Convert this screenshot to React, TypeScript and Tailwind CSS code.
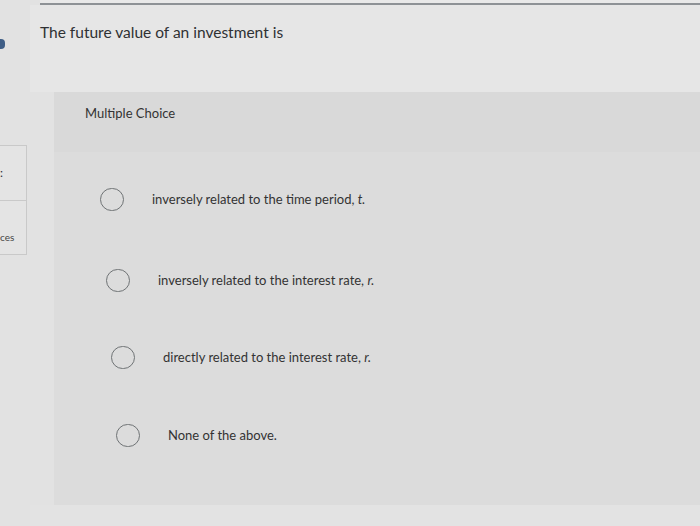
const options = [
  { text: 'inversely related to the time period, ', v: 't.', indent: 'pl-[46px]', mt: 'mt-[35px]' },
  { text: 'inversely related to the interest rate, ', v: 'r.', indent: 'pl-[52px]', mt: 'mt-[57px]' },
  { text: 'directly related to the interest rate, ', v: 'r.', indent: 'pl-[57px]', mt: 'mt-[53px]' },
  { text: 'None of the above.', v: '', indent: 'pl-[62px]', mt: 'mt-[54px]' },
]

function Radio() {
  return <div className="w-[24px] h-[23px] rounded-full border-[1.5px] border-[#6f7375] shrink-0" />
}

export default function App() {
  return (
    <div className="w-[700px] h-[526px] bg-[#e2e2e2] flex overflow-hidden text-[#2f3133]" style={{ fontFamily: 'Lato, "Open Sans", sans-serif' }}>
      {/* left sidebar sliver */}
      <div className="w-[30px] shrink-0 flex flex-col">
        <div className="h-[39px]" />
        <div className="w-[8px] h-[10px] rounded-full bg-[#3f5e86] -ml-[3px]" />
        <div className="h-[96px]" />
        <div className="w-[27px] h-[110px] border-y border-r border-[#c9c9c9] bg-[#e4e4e4] flex flex-col">
          <div className="h-[55px] border-b border-[#c9c9c9] flex items-center">
            <span className="text-[12px] leading-none">:</span>
          </div>
          <div className="flex-1 flex items-end pb-[12px]">
            <span className="text-[10px] leading-none text-[#444]">ces</span>
          </div>
        </div>
      </div>

      {/* main */}
      <div className="flex-1 flex flex-col">
        <div className="h-[5px] border-b-2 border-[#8e9296] ml-[10px] bg-[#e9e9e9]" />
        <div className="h-[87px] bg-[#e6e6e6] pl-[10px] pt-[18px]">
          <p className="text-[15.5px] leading-[18px]">The future value of an investment is</p>
        </div>
        <div className="ml-[24px] h-[413px] bg-[#dcdcdc] flex flex-col">
          <div className="bg-[#d9d9d9] h-[60px] pl-[31px] pt-[14px]">
            <p className="text-[13px] leading-[15px] text-[#333]">Multiple Choice</p>
          </div>
          <div className="flex flex-col">
            {options.map((o, i) => (
              <div key={i} className={`${o.mt} ${o.indent} h-[24px] flex items-center gap-[28px]`}>
                <Radio />
                <span className="text-[13px] leading-none text-[#333]">
                  {o.text}
                  {o.v && <i>{o.v}</i>}
                </span>
              </div>
            ))}
          </div>
        </div>
        <div className="flex-1 bg-[#e3e3e3]" />
      </div>
    </div>
  )
}
